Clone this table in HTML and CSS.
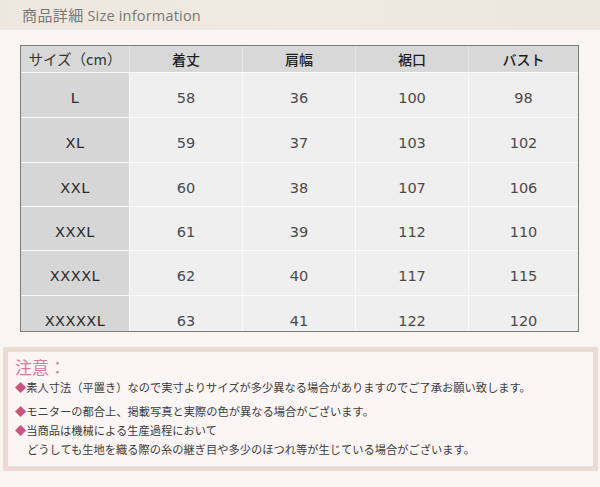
FILE: index.html
```html
<!DOCTYPE html>
<html lang="ja">
<head>
<meta charset="utf-8">
<link rel="stylesheet" href="styles.css">
</head>
<body>
<div class="band"><h1 class="title">商品詳細 <span class="en">Size information</span></h1></div>
<div class="table">
  <div class="cell head first">サイズ（cm）</div>
  <div class="cell head">着丈</div>
  <div class="cell head">肩幅</div>
  <div class="cell head">裾口</div>
  <div class="cell head">バスト</div>

  <div class="cell size">L</div><div class="cell">58</div><div class="cell">36</div><div class="cell">100</div><div class="cell">98</div>
  <div class="cell size">XL</div><div class="cell">59</div><div class="cell">37</div><div class="cell">103</div><div class="cell">102</div>
  <div class="cell size">XXL</div><div class="cell">60</div><div class="cell">38</div><div class="cell">107</div><div class="cell">106</div>
  <div class="cell size">XXXL</div><div class="cell">61</div><div class="cell">39</div><div class="cell">112</div><div class="cell">110</div>
  <div class="cell size">XXXXL</div><div class="cell">62</div><div class="cell">40</div><div class="cell">117</div><div class="cell">115</div>
  <div class="cell size">XXXXXL</div><div class="cell">63</div><div class="cell">41</div><div class="cell">122</div><div class="cell">120</div>
</div>
<div class="notice">
  <div class="notice-inner">
    <p class="caution">注意：</p>
    <p class="item item1"><span class="dia">◆</span>素人寸法（平置き）なので実寸よりサイズが多少異なる場合がありますのでご了承お願い致します。</p>
    <p class="item item2"><span class="dia">◆</span>モニターの都合上、掲載写真と実際の色が異なる場合がございます。</p>
    <p class="item item3"><span class="dia">◆</span>当商品は機械による生産過程において<br><span class="indent">どうしても生地を織る際の糸の継ぎ目や多少のほつれ等が生じている場合がございます。</span></p>
  </div>
</div>
</body>
</html>
```
FILE: styles.css
```css
html, body {
  margin: 0;
  padding: 0;
}
body {
  background: #f8f5f2;
  width: 600px;
  height: 487px;
  overflow: hidden;
  font-family: "Noto Sans CJK JP", "Liberation Sans", sans-serif;
}
.band {
  height: 30px;
  background: linear-gradient(90deg, #eee7df 0%, #efe9e2 50%, #ede6de 100%);
  padding-left: 22px;
  box-sizing: border-box;
}
.title {
  margin: 0;
  font-size: 15px;
  font-weight: normal;
  line-height: 30px;
  color: #777;
  letter-spacing: 0.4px;
}
.title .en {
  font-family: "Open Sans", "DejaVu Sans", sans-serif;
  font-size: 14.5px;
  letter-spacing: 0.2px;
}
.table {
  margin: 15px 0 0 20px;
  width: 559px;
  box-sizing: border-box;
  border: 1px solid #7c7c7c;
  display: grid;
  grid-template-columns: 108px 113px 113px 113px 110px;
  grid-template-rows: 26px 44px 44px 43px 43px 44px 35px;
  row-gap: 1px;
  background: #fbfbfb;
}
.cell {
  background: #efefef;
  display: flex;
  justify-content: center;
  align-items: flex-start;
  padding-top: 16px;
  box-sizing: border-box;
  line-height: 18px;
  font-family: "DejaVu Sans", "Liberation Sans", sans-serif;
  font-size: 14.5px;
  color: #4a4a4a;
  border-left: 1px solid #fafafa;
}
.cell.size {
  background: #d6d6d6;
  color: #2a2a2a;
  border-left: none;
  letter-spacing: 0.5px;
}
.cell.head {
  background: #d8d8d8;
  padding-top: 4px;
  font-family: "Noto Sans CJK JP", sans-serif;
  font-weight: 500;
  font-size: 14px;
  color: #1e1e1e;
  border-left: 1px solid #e4e4e4;
}
.cell.head.first {
  border-left: none;
  font-weight: normal;
  color: #333;
  font-size: 14.5px;
}
.notice {
  margin: 15px 2px 0 3px;
  border: 5px solid #ebdbd4;
  background: #fbf5f5;
}
.notice-inner {
  padding: 4px 0 7px 7px;
  font-family: "Noto Sans CJK JP", serif;
  color: #3c3c3c;
}
.caution {
  margin: 0;
  font-size: 17px;
  line-height: 22px;
  color: #d07f9d;
}
.item {
  margin: 0;
  font-size: 11.25px;
  line-height: 19px;
  letter-spacing: 0;
}
.item1 {
  margin-bottom: 5px;
}
.dia {
  color: #c8557f;
}
.indent {
  padding-left: 12px;
}
```
